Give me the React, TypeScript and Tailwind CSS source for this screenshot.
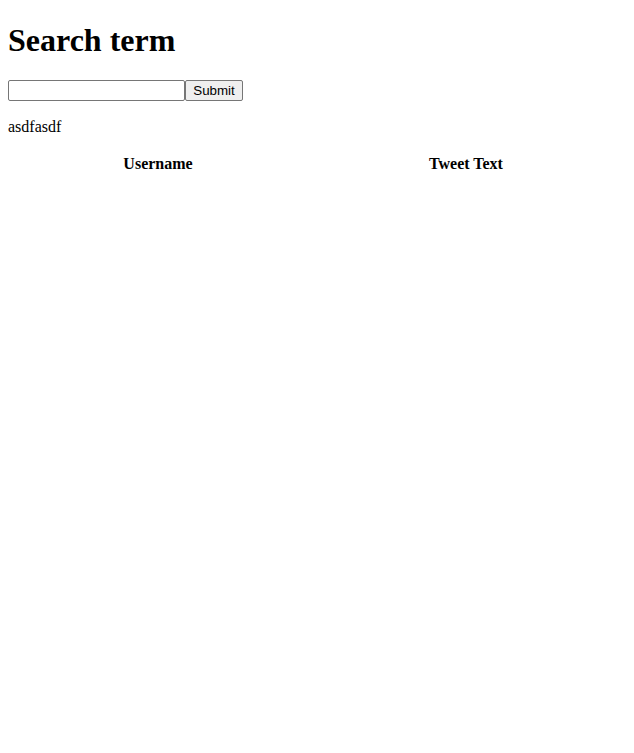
export default function App() {
  return (
    <div className="min-h-[753px] bg-white px-2 pt-[22px] font-['Liberation_Serif',serif] text-base text-black">
      <h1 className="text-[32px] font-bold leading-[37px]">Search term</h1>

      <form className="mt-[21px] flex h-[21px] items-stretch" onSubmit={(e) => e.preventDefault()}>
        <input
          type="text"
          className="h-[21px] w-[177px] rounded-[2px] border border-[#767676] bg-white px-0.5 font-['Liberation_Sans',sans-serif] text-[13.33px] outline-none"
        />
        <button
          type="submit"
          className="h-[21px] w-[58px] rounded-[2px] border border-[#767676] bg-[#efefef] font-['Liberation_Sans',sans-serif] text-[13.33px] leading-none text-black"
        >
          Submit
        </button>
      </form>

      <p className="mt-4 pt-px leading-[18px]">asdfasdf</p>

      <table className="mt-4 w-full border-separate border-spacing-[2px]">
        <thead>
          <tr>
            <th className="w-[296px] p-px text-center font-bold leading-[18px]">Username</th>
            <th className="p-px text-center font-bold leading-[18px]">Tweet Text</th>
          </tr>
        </thead>
        <tbody />
      </table>
    </div>
  );
}
